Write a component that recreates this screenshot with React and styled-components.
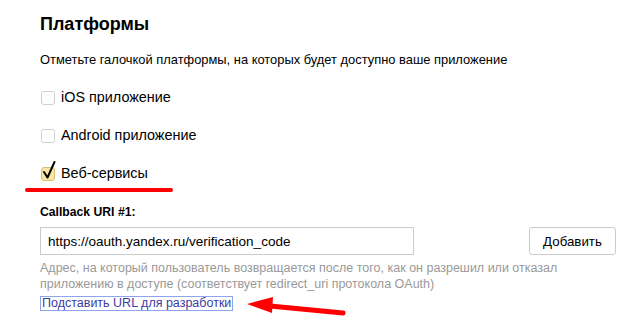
import React from 'react'
import styled, { createGlobalStyle } from 'styled-components'

const GlobalStyle = createGlobalStyle`
  body {
    margin: 0;
    background: #fff;
    font-family: "Liberation Sans", Arial, sans-serif;
    color: #000;
  }
`;

const Page = styled.div`
    width: 638px;
    height: 332px;
    box-sizing: border-box;
    padding: 14px 0 0 40px;
    overflow: hidden;
`;

const Title = styled.h2`
    margin: 0;
    font-size: 18px;
    line-height: 21px;
    font-weight: bold;
`;

const Lead = styled.p`
    margin: 17px 0 0;
    font-size: 12.9px;
    line-height: 15px;
`;

const Options = styled.div`
    margin-top: 21px;
    display: flex;
    flex-direction: column;
    gap: 20px;
`;

const Option = styled.label`
    position: relative;
    display: flex;
    align-items: center;
    gap: 6px;
    height: 18px;
    font-size: 14.4px;
    line-height: 18px;
`;

const Box = styled.span`
    position: relative;
    width: 14px;
    height: 14px;
    box-sizing: border-box;
    border-radius: 3px;
    border: 1px solid ${p => (p.checked ? '#d6bf76' : '#cfcfcf')};
    background: ${p => (p.checked ? '#f9e6a4' : '#fff')};
    margin: 2px 0 0 1px;
`;

const Tick = styled.svg`
    position: absolute;
    left: -1px;
    top: -10px;
`;

const Underline = styled.span`
    position: absolute;
    left: -15px;
    top: 24px;
    width: 148px;
    height: 4px;
    border-radius: 2px;
    background: #ff0000;
`;

const FieldLabel = styled.div`
    margin-top: 23px;
    font-size: 12.2px;
    line-height: 15px;
    font-weight: bold;
`;

const InputRow = styled.div`
    margin-top: 7px;
    width: 576px;
    display: flex;
    justify-content: space-between;
`;

const UrlInput = styled.div`
    width: 374px;
    height: 28px;
    box-sizing: border-box;
    border: 1px solid #cccccc;
    padding-left: 7px;
    display: flex;
    align-items: center;
    font-size: 13.5px;
`;

const Button = styled.div`
    width: 87px;
    height: 28px;
    box-sizing: border-box;
    border: 1px solid #cccccc;
    border-radius: 3px;
    display: flex;
    align-items: center;
    justify-content: center;
    font-size: 13.3px;
`;

const Hint = styled.p`
    margin: 5px 0 0;
    font-size: 12.5px;
    line-height: 16px;
    color: #999999;
`;

const LinkRow = styled.div`
    position: relative;
    margin-top: 4px;
    font-size: 12.5px;
    line-height: 15px;
`;

const DevLink = styled.span`
    display: inline-block;
    border: 1px solid #8ea5ec;
    padding: 0 1px;
    color: #3c3c9e;
    line-height: 13px;
`;

const Arrow = styled.svg`
    position: absolute;
    left: 204px;
    top: -2px;
`;

const Checkbox = ({ checked, children, marked }) => (
    <Option>
        <Box checked={checked}>
            {checked && (
                <Tick width="16" height="24" viewBox="0 0 16 24">
                    <path d="M3 14 L6.5 19.5 L13.5 4" fill="none" stroke="#000" strokeWidth="2" strokeLinecap="round" strokeLinejoin="round" />
                </Tick>
            )}
        </Box>
        {children}
        {marked && <Underline />}
    </Option>
);

const App = () => {
    return (
        <Page>
            <GlobalStyle />
            <Title>Платформы</Title>
            <Lead>Отметьте галочкой платформы, на которых будет доступно ваше приложение</Lead>
            <Options>
                <Checkbox>iOS приложение</Checkbox>
                <Checkbox>Android приложение</Checkbox>
                <Checkbox checked marked>Веб-сервисы</Checkbox>
            </Options>
            <FieldLabel>Callback URI #1:</FieldLabel>
            <InputRow>
                <UrlInput>https://oauth.yandex.ru/verification_code</UrlInput>
                <Button>Добавить</Button>
            </InputRow>
            <Hint>
                Адрес, на который пользователь возвращается после того, как он разрешил или отказал<br />
                приложению в доступе (соответствует redirect_uri протокола OAuth)
            </Hint>
            <LinkRow>
                <DevLink>Подставить URL для разработки</DevLink>
                <Arrow width="104" height="24" viewBox="0 0 104 24">
                    <path d="M3 10 L29 3 L28 19 Z" fill="#ff0000" />
                    <path d="M26 12 L99 19" stroke="#ff0000" strokeWidth="5" strokeLinecap="round" />
                </Arrow>
            </LinkRow>
        </Page>
    )
}

export default App
